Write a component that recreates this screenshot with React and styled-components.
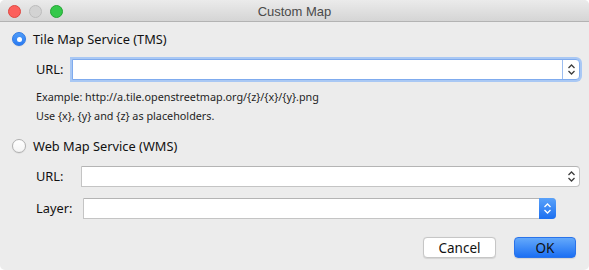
import React from 'react'
import styled, { createGlobalStyle } from 'styled-components'

const GlobalStyle = createGlobalStyle`
  html, body {
    margin: 0;
    padding: 0;
    background: #ffffff;
  }
  body {
    font-family: "Noto Sans", "DejaVu Sans", sans-serif;
    -webkit-font-smoothing: antialiased;
  }
`

const Chevrons = ({ color = '#3d3d3d' }) => (
  <svg width="9" height="13" viewBox="0 0 9 13">
    <path d="M1.5 5 L4.5 2 L7.5 5" fill="none" stroke={color} strokeWidth="1.3" />
    <path d="M1.5 8 L4.5 11 L7.5 8" fill="none" stroke={color} strokeWidth="1.3" />
  </svg>
)

const App = () => {
  return (
    <>
      <GlobalStyle />
      <Window>
        <TitleBar>
          <Lights>
            <Light $fill="#fc605c" $edge="#de4841" />
            <Light $fill="#d3d3d3" $edge="#bcbcbc" />
            <Light $fill="#34c84a" $edge="#24a534" />
          </Lights>
          <Title>Custom Map</Title>
          <span />
        </TitleBar>

        <Body>
          <RadioRow $top={8}>
            <Radio $checked />
            <RadioLabel>Tile Map Service (TMS)</RadioLabel>
          </RadioRow>

          <FieldRow $top={10}>
            <Label $width={36}>URL:</Label>
            <Combo $focused>
              <TextArea />
              <Stepper $focused>
                <Chevrons />
              </Stepper>
            </Combo>
          </FieldRow>

          <Hints>
            <Hint>Example: http://a.tile.openstreetmap.org/&#123;z&#125;/&#123;x&#125;/&#123;y&#125;.png</Hint>
            <Hint>Use &#123;x&#125;, &#123;y&#125; and &#123;z&#125; as placeholders.</Hint>
          </Hints>

          <RadioRow $top={12}>
            <Radio />
            <RadioLabel>Web Map Service (WMS)</RadioLabel>
          </RadioRow>

          <FieldRow $top={10}>
            <Label $width={45}>URL:</Label>
            <Combo>
              <TextArea />
              <Stepper>
                <Chevrons />
              </Stepper>
            </Combo>
          </FieldRow>

          <FieldRow $top={10} $right={24}>
            <Label $width={47}>Layer:</Label>
            <Combo>
              <TextArea />
              <BlueStepper>
                <Chevrons color="#ffffff" />
              </BlueStepper>
            </Combo>
          </FieldRow>

          <Buttons>
            <Button $width={73}>Cancel</Button>
            <Button $width={62} $primary>OK</Button>
          </Buttons>
        </Body>
      </Window>
    </>
  )
}

export default App

const Window = styled.div`
  width: 589px;
  height: 270px;
  background: #ececec;
  border-radius: 5px;
  overflow: hidden;
  display: flex;
  flex-direction: column;
`

const TitleBar = styled.div`
  height: 21px;
  flex-shrink: 0;
  display: grid;
  grid-template-columns: 1fr auto 1fr;
  align-items: center;
  background: linear-gradient(#ebebeb, #d5d5d5);
  border-bottom: 1px solid #b3b3b3;
`

const Lights = styled.div`
  display: flex;
  gap: 8px;
  padding-left: 8px;
  padding-top: 1px;
`

const Light = styled.span`
  width: 11px;
  height: 11px;
  border-radius: 50%;
  background: ${p => p.$fill};
  border: 0.5px solid ${p => p.$edge};
`

const Title = styled.div`
  font-family: "Liberation Sans", Arial, sans-serif;
  font-size: 13px;
  color: #4a4a4a;
  padding-top: 1px;
`

const Body = styled.div`
  display: flex;
  flex-direction: column;
  padding: 0 9px 0 12px;
  font-size: 12.8px;
  color: #111;
`

const RadioRow = styled.div`
  display: flex;
  align-items: center;
  gap: 7px;
  height: 18px;
  margin-top: ${p => p.$top}px;
`

const Radio = styled.span`
  width: 14px;
  height: 14px;
  box-sizing: border-box;
  border-radius: 50%;
  display: flex;
  align-items: center;
  justify-content: center;
  background: ${p => (p.$checked ? 'linear-gradient(#4f9cf8, #2a7bf2)' : 'linear-gradient(#ffffff, #f4f4f4)')};
  border: 1px solid ${p => (p.$checked ? '#2f78e4' : '#b0b0b0')};
  box-shadow: 0 0.5px 1px rgba(0, 0, 0, 0.12);

  &::after {
    content: '';
    display: ${p => (p.$checked ? 'block' : 'none')};
    width: 5px;
    height: 5px;
    border-radius: 50%;
    background: #ffffff;
  }
`

const RadioLabel = styled.span`
  line-height: 18px;
`

const FieldRow = styled.div`
  display: flex;
  align-items: center;
  height: 22px;
  margin-top: ${p => p.$top}px;
  padding-left: 24px;
  margin-right: ${p => p.$right || 0}px;
`

const Label = styled.span`
  width: ${p => p.$width}px;
  flex-shrink: 0;
  line-height: 22px;
`

const Combo = styled.div`
  flex: 1;
  display: flex;
  height: 21px;
  box-sizing: border-box;
  background: #ffffff;
  border: 1px solid ${p => (p.$focused ? '#7fabee' : '#c4c4c4')};
  border-top-color: ${p => (p.$focused ? '#7fabee' : '#b4b4b4')};
  border-radius: 0 4px 4px 0;
  box-shadow: ${p => (p.$focused ? '0 0 0 2px #a9c8f4' : 'none')};
`

const TextArea = styled.div`
  flex: 1;
`

const Stepper = styled.div`
  width: 16px;
  display: flex;
  align-items: center;
  justify-content: center;
  border-left: ${p => (p.$focused ? '1px solid #9cbdf0' : 'none')};
`

const BlueStepper = styled.div`
  width: 17px;
  margin: -1px -1px -1px 0;
  display: flex;
  align-items: center;
  justify-content: center;
  background: linear-gradient(#5aa2fa, #1c6ff0);
  border-radius: 0 4px 4px 0;
`

const Hints = styled.div`
  display: flex;
  flex-direction: column;
  padding-left: 24px;
  margin-top: 7px;
  font-size: 10.8px;
  color: #1f1f1f;
`

const Hint = styled.div`
  line-height: 19px;
`

const Buttons = styled.div`
  display: flex;
  justify-content: flex-end;
  gap: 18px;
  margin-top: 18px;
  padding-right: 4px;
`

const Button = styled.button`
  width: ${p => p.$width}px;
  height: 21px;
  box-sizing: border-box;
  padding: 0;
  font-family: inherit;
  font-size: 13.5px;
  border-radius: 4px;
  color: #111111;
  background: ${p => (p.$primary ? 'linear-gradient(#64a9fb, #1b6ff3)' : '#ffffff')};
  border: 1px solid ${p => (p.$primary ? '#2a73ea' : '#c6c6c6')};
  box-shadow: 0 0.5px 1px rgba(0, 0, 0, 0.1);
`
